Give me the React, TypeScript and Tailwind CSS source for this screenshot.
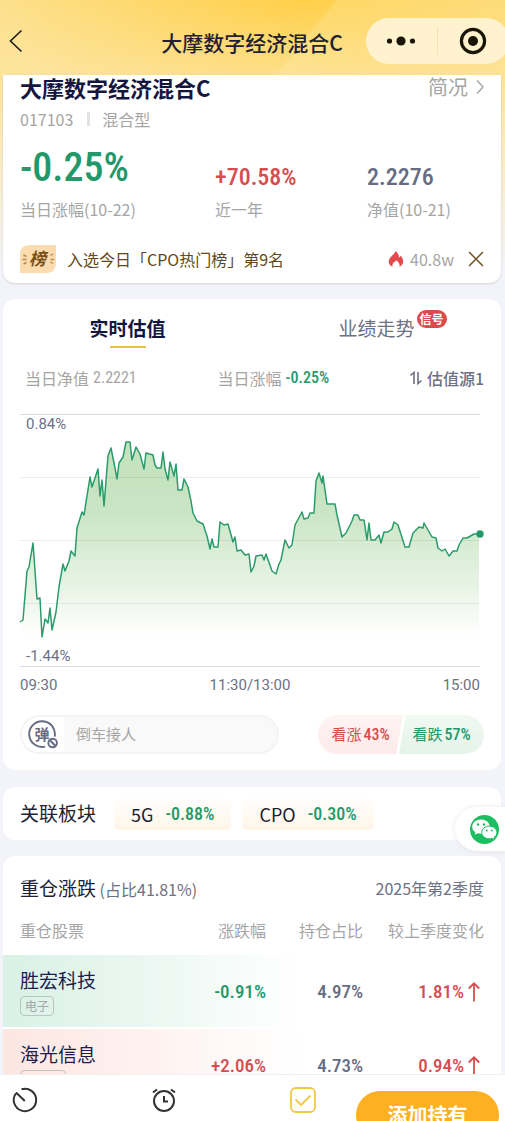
import { useState } from "react";
import clsx from "clsx";

const CHART_POINTS: [number, number][] = [
  [0, 208], [3, 206], [7, 157], [9, 153], [13, 129], [17, 185], [20, 184], [22, 223], [25, 205], [28, 209],
  [30, 194], [32, 216], [36, 198], [39, 173], [43, 150], [45, 157], [49, 147], [51, 137], [55, 142], [57, 114],
  [62, 98], [64, 101], [70, 63], [72, 73], [78, 55], [80, 82], [82, 66], [84, 92], [88, 42], [91, 34],
  [95, 54], [97, 65], [99, 49], [103, 43], [106, 28], [110, 28], [112, 46], [116, 33], [120, 40], [124, 55],
  [126, 39], [133, 41], [135, 51], [137, 54], [141, 54], [143, 38], [145, 55], [148, 66], [150, 48], [154, 62],
  [156, 50], [158, 76], [162, 76], [164, 65], [168, 73], [171, 87], [173, 99], [177, 107], [183, 110], [187, 122],
  [190, 135], [192, 125], [194, 133], [198, 133], [200, 108], [204, 111], [208, 110], [213, 128], [215, 123],
  [217, 137], [221, 136], [225, 141], [229, 140], [231, 158], [234, 152], [236, 142], [242, 141], [244, 146],
  [246, 140], [252, 157], [256, 160], [259, 150], [261, 146], [265, 126], [269, 134], [272, 131], [275, 111],
  [282, 98], [284, 105], [288, 104], [290, 99], [294, 99], [296, 67], [299, 59], [302, 69], [303, 62], [307, 90],
  [315, 90], [317, 101], [322, 123], [326, 119], [332, 107], [334, 101], [338, 101], [340, 106], [344, 106],
  [347, 126], [349, 109], [351, 126], [355, 126], [359, 121], [361, 129], [364, 118], [368, 118], [372, 115],
  [374, 108], [378, 111], [385, 133], [389, 133], [393, 119], [399, 113], [403, 114], [404, 109], [412, 123],
  [416, 124], [418, 134], [422, 137], [425, 135], [429, 142], [433, 137], [437, 137], [439, 131], [443, 124],
  [447, 124], [454, 120], [459, 120],
];

const NUM = "font-['Roboto_Condensed',Roboto,sans-serif]";

const sectors = [
  { name: "5G", change: "-0.88%" },
  { name: "CPO", change: "-0.30%" },
];

const holdings = [
  { name: "胜宏科技", tag: "电子", change: "-0.91%", up: false, ratio: "4.97%", diff: "1.81%" },
  { name: "海光信息", tag: "计算机", change: "+2.06%", up: true, ratio: "4.73%", diff: "0.94%" },
];

function Header() {
  return (
    <header className="flex h-[75px] shrink-0 items-center justify-between bg-[linear-gradient(129deg,transparent_59%,rgba(255,244,200,0.2)_60%,transparent)] pt-[7px]">
      <button type="button" aria-label="返回" className="flex w-[138px] pl-2">
        <svg className="h-6 w-4" viewBox="0 0 16 24" fill="none" stroke="#222" strokeWidth="1.7">
          <path d="M13.5 1.5 2.5 12l11 10.5" />
        </svg>
      </button>
      <h1 className="pt-1 text-[21px] font-medium whitespace-nowrap text-[#1f1e33]">大摩数字经济混合C</h1>
      <div className="-mr-1 flex h-[46px] w-[143px] shrink-0 items-center rounded-full bg-[#fff3cf]">
        <button type="button" aria-label="更多" className="flex flex-1 justify-center">
          <svg className="h-3 w-8" viewBox="0 0 32 12" fill="#1b1508">
            <circle cx="4.5" cy="6" r="2.6" />
            <circle cx="16" cy="6" r="4.6" />
            <circle cx="27.5" cy="6" r="2.6" />
          </svg>
        </button>
        <span className="h-7 w-px bg-[#f3e3b4]" />
        <button type="button" aria-label="关闭" className="flex flex-1 justify-center">
          <svg className="size-7" viewBox="0 0 28 28">
            <circle cx="14" cy="14" r="11.6" fill="none" stroke="#1b1508" strokeWidth="3.2" />
            <circle cx="14" cy="14" r="5" fill="#1b1508" />
          </svg>
        </button>
      </div>
    </header>
  );
}

function Summary() {
  return (
    <section className="shrink-0 rounded-b-xl bg-white px-[17px] shadow-sm">
      <div className="flex h-6 items-center justify-between">
        <h2 className="text-[22px] leading-5 font-bold text-[#15163f]">大摩数字经济混合C</h2>
        <a href="#profile" className="flex items-center gap-2 text-xl leading-6 text-[#a5a5a5]">
          简况
          <svg className="h-4 w-2" viewBox="0 0 8 16" fill="none" stroke="#a5a5a5" strokeWidth="1.4">
            <path d="m1 1.5 6 6.5-6 6.5" />
          </svg>
        </a>
      </div>
      <div className="mt-2 flex h-6 items-center text-base text-[#a5a5a5]">
        017103
        <span className="mr-3 ml-3.5 h-3.5 w-[3px] bg-[#e2e2e2]" />
        混合型
      </div>

      <dl className="mt-3 grid grid-cols-[195fr_152fr_117fr] items-end">
        <div className="flex flex-col">
          <dd className={clsx(NUM, "text-[40px] leading-[50px] font-medium text-[#23996a]")}>-0.25%</dd>
          <dt className="order-last mt-1 text-base leading-6 text-[#a5a5a5]">当日涨幅(10-22)</dt>
        </div>
        <div className="flex flex-col">
          <dd className={clsx(NUM, "text-2xl leading-8 font-medium text-[#d64c4f]")}>+70.58%</dd>
          <dt className="order-last mt-1 text-base leading-6 text-[#a5a5a5]">近一年</dt>
        </div>
        <div className="flex flex-col">
          <dd className={clsx(NUM, "text-2xl leading-8 font-medium text-[#666c83]")}>2.2276</dd>
          <dt className="order-last mt-1 text-base leading-6 text-[#a5a5a5]">净值(10-21)</dt>
        </div>
      </dl>

      <div className="mt-3.5 flex h-12 items-center">
        <svg className="h-7 w-9" viewBox="0 0 36 28">
          <path d="M10 0h26v18q0 10-10 10H0V10Q0 0 10 0Z" fill="#fbdcae" />
          <path d="m3.500 10 3 1.500M2.500 14.500h4M3.500 19l3-1.500M33 9l-2.500 1.500m3.500 4h-3.500m2.500 4-2.500-1.500" stroke="#b48a4e" strokeWidth="1.400" />
          <text x="9" y="20" fontSize="17" fontWeight="700" fontStyle="italic" fill="#7a5019">榜</text>
        </svg>
        <p className="ml-[11px] flex-1 text-base text-[#634717]">入选今日「CPO热门榜」第9名</p>
        <svg className="h-[18px] w-4" viewBox="0 0 16 18">
          <path
            d="M7.500 1c2.500 2 3.700 4.200 3.300 6.700.9-.4 1.400-1.200 1.600-2.200 2.200 2.300 3.100 4.600 2.600 7-.4 2-1.700 3.500-3.600 4.300.7-2.600-.4-4.600-3.100-6.300-3 1.800-4.500 3.700-3.800 6.300C2.400 15.900 1.100 14.300.8 12.200.4 9.300 2.300 7.300 4.500 5.300 5.900 4 6.900 2.700 7.500 1Z"
            fill="#e5484d"
          />
        </svg>
        <span className="ml-1.5 text-base text-[#a5a5a5]">40.8w</span>
        <button type="button" aria-label="关闭提示" className="ml-3.5">
          <svg className="size-4" viewBox="0 0 16 16" fill="none" stroke="#6f5426" strokeWidth="1.5">
            <path d="m1 1 14 14M15 1 1 15" />
          </svg>
        </button>
      </div>
    </section>
  );
}

function EstimateChart() {
  const line = CHART_POINTS.map((p) => p.join(",")).join(" ");

  return (
    <div className="mt-6 pr-[21px] pl-[17px] font-[Roboto,sans-serif] text-[15px] leading-5 text-[#6c7184]">
      <div className="relative">
        <svg className="block w-full overflow-visible" viewBox="0 0 460 252" fill="none">
          <defs>
            <linearGradient id="area" x1="0" y1="28" x2="0" y2="222" gradientUnits="userSpaceOnUse">
              <stop offset="0" stopColor="#c3e2bd" />
              <stop offset="0.35" stopColor="#c9e5c4" />
              <stop offset="0.8" stopColor="#ecf6ea" />
              <stop offset="1" stopColor="#fff" />
            </linearGradient>
          </defs>
          <polygon points={`0,222 ${line} 459,222`} fill="url(#area)" />
          <path d="M0 .5h460M0 252.500h460" stroke="#dcdcdf" />
          <path d="M0 63.500h460M0 126.500h460M0 189.500h460" stroke="#000" strokeOpacity="0.07" />
          <polyline points={line} stroke="#2b9b6b" strokeWidth="1.5" strokeLinejoin="round" />
          <circle cx="460" cy="120" r="3.700" fill="#23996a" />
        </svg>
        <span className="absolute top-0 left-1.5">0.84%</span>
        <span className="absolute bottom-0 left-1.5">-1.44%</span>
      </div>
      <div className="mt-[9px] grid grid-cols-3">
        <span>09:30</span>
        <span className="text-center">11:30/13:00</span>
        <span className="text-right">15:00</span>
      </div>
    </div>
  );
}

function Estimate() {
  const [tab, setTab] = useState(0);

  return (
    <section className="shrink-0 rounded-xl bg-white pt-[15px] pb-4">
      <div role="tablist" className="grid grid-cols-2">
        {["实时估值", "业绩走势"].map((label, i) => (
          <button
            key={label}
            type="button"
            role="tab"
            aria-selected={tab === i}
            onClick={() => setTab(i)}
            className={clsx(
              "flex flex-col items-center text-[19px] leading-7",
              tab === i ? "font-bold text-[#15163f]" : "text-[#6c7184]",
            )}
          >
            <span className="relative">
              {label}
              {i === 1 && (
                <span className="absolute -top-1 left-full ml-0.5 rounded-full bg-[#dd4a4a] px-[3px] text-xs leading-[18px] font-bold whitespace-nowrap text-white">
                  信号
                </span>
              )}
            </span>
            <span className={clsx("mt-1 h-0.5 w-9", tab === i && "bg-[#e3c04f]")} />
          </button>
        ))}
      </div>

      <div className="mt-[18px] grid grid-cols-[193fr_150fr_117fr] items-center pr-[17px] pl-[22px] text-base leading-6 text-[#a5a5a5]">
        <span className="flex gap-1">
          当日净值 <span className={NUM}>2.2221</span>
        </span>
        <span className="flex gap-1">
          当日涨幅 <span className={clsx(NUM, "font-medium text-[#23996a]")}>-0.25%</span>
        </span>
        <button type="button" className="flex items-center justify-end gap-1 font-medium whitespace-nowrap text-[#6c7184]">
          <svg className="h-3.5 w-3.5" viewBox="0 0 14 14" fill="none" stroke="#6c7184" strokeWidth="1.600">
            <path d="M1.500 4.500 5 1.500V13M9 1v11.500l3.500-3" />
          </svg>
          估值源1
        </button>
      </div>

      <EstimateChart />

      <div className="mt-5 flex h-[39px] items-center justify-between px-[17px]">
        <div className="flex h-full w-[259px] overflow-hidden rounded-full border-2 border-[#f4f4f4] bg-[#f9f9f9]">
          <button type="button" aria-label="弹幕" className="flex w-[42px] items-center justify-center bg-white">
            <svg className="size-[30px]" viewBox="0 0 28 28" fill="none" stroke="#666c83" strokeWidth="1.800">
              <path d="M24.900 15.500A12 12 0 1 0 16 24.800" />
              <text x="6" y="18.500" fontSize="14" fontWeight="700" fill="#666c83" stroke="none">弹</text>
              <circle cx="23" cy="21.500" r="4" />
              <path d="m20.200 18.700 5.600 5.600" />
            </svg>
          </button>
          <input
            aria-label="发弹幕"
            placeholder="倒车接人"
            className="min-w-0 flex-1 bg-transparent pl-3 text-[15px] outline-none placeholder:text-[#a5a5a5]"
          />
        </div>
        <div className="flex h-full w-[166px]">
          <button
            type="button"
            className="-mr-1 flex flex-1 items-center justify-center gap-0.5 rounded-l-full bg-linear-to-b from-[#fff3f3] to-[#fdeaea] text-[15px] text-[#d64c4f] [clip-path:polygon(0_0,100%_0,92%_100%,0_100%)]"
          >
            看涨<span className={clsx(NUM, "text-base font-medium")}>43%</span>
          </button>
          <button
            type="button"
            className="flex flex-1 items-center justify-center gap-0.5 rounded-r-full bg-linear-to-b from-[#f0f9f2] to-[#e5f3e9] text-[15px] text-[#23996a] [clip-path:polygon(8%_0,100%_0,100%_100%,0_100%)]"
          >
            看跌<span className={clsx(NUM, "text-base font-medium")}>57%</span>
          </button>
        </div>
      </div>
    </section>
  );
}

function Sectors() {
  return (
    <section className="relative mt-px flex h-[53px] shrink-0 items-center gap-[11px] rounded-xl bg-white px-[17px]">
      <h2 className="mr-[7px] text-[19px] text-[#1f1e33]">关联板块</h2>
      {sectors.map((s) => (
        <a
          key={s.name}
          href={`#${s.name}`}
          className="flex h-[33px] items-center gap-3 rounded bg-linear-to-b from-white to-[#fef5e7] px-[17px] text-lg text-[#1f1e33]"
        >
          {s.name}
          <span className={clsx(NUM, "text-lg font-medium text-[#23996a]")}>{s.change}</span>
        </a>
      ))}
      {/* Share to WeChat, docked to the screen edge */}
      <button
        type="button"
        aria-label="分享到微信"
        className="absolute top-5 -right-1 z-10 flex h-11 w-[50px] items-center justify-end rounded-l-full bg-white pr-1.5 shadow-[0_0_6px_rgba(0,0,0,0.08)]"
      >
        <svg className="size-[29px]" viewBox="0 0 29 29">
          <circle cx="14.500" cy="14.500" r="14.500" fill="#1bbf61" />
          <path
            d="M11 4.500c-5 0-8.800 3.200-8.800 7.200 0 2.300 1.200 4.200 3.200 5.500l-.8 2.600 3-1.500c1 .3 2 .5 3.400.5 5 0 8.800-3.100 8.800-7.100S16 4.500 11 4.500Z"
            fill="#fff"
          />
          <path
            d="M19.300 11.200c-4.300 0-7.600 2.800-7.600 6.300s3.300 6.300 7.600 6.300c1 0 2-.2 2.800-.4l2.600 1.300-.7-2.200c1.800-1.200 2.900-3 2.900-5 0-3.500-3.300-6.300-7.600-6.300Z"
            fill="#fff"
            stroke="#1bbf61"
          />
          <g fill="#1bbf61">
            <circle cx="8" cy="9.500" r="1.200" />
            <circle cx="14" cy="9.500" r="1.200" />
            <circle cx="16.800" cy="15.500" r="1" />
            <circle cx="21.800" cy="15.500" r="1" />
          </g>
        </svg>
      </button>
    </section>
  );
}

function Holdings() {
  return (
    <section className="shrink-0 rounded-t-xl bg-white pt-4">
      <div className="flex h-8 items-center justify-between px-[17px] text-base text-[#6c7184]">
        <h2>
          <span className="text-[19px] text-[#1f1e33]">重仓涨跌</span> (占比41.81%)
        </h2>
        <span>2025年第2季度</span>
      </div>
      <table className="w-full table-fixed border-separate border-spacing-x-0 border-spacing-y-0.5 text-right">
        <thead>
          <tr className="h-[47px] text-base text-[#a5a5a5]">
            <th className="pl-[17px] text-left font-normal">重仓股票</th>
            <th className="w-[100px] font-normal">涨跌幅</th>
            <th className="w-[97px] font-normal">持仓占比</th>
            <th className="w-[138px] pr-[17px] font-normal">较上季度变化</th>
          </tr>
        </thead>
        <tbody>
          {holdings.map((h) => (
            <tr
              key={h.name}
              className={clsx(
                "h-[72px] bg-linear-to-r to-60%",
                h.up ? "from-[#fde6e2] to-white" : "from-[#d9f1e6] to-white",
              )}
            >
              <td className="pt-0.5 pl-[17px] text-left">
                <div className="text-[19px] leading-6 text-[#1b1d4d]">{h.name}</div>
                <span className="mt-0.5 inline-block rounded-sm border border-[#bcc4c2] px-1 text-xs leading-[18px] text-[#a5a5a5]">
                  {h.tag}
                </span>
              </td>
              <td className={clsx(NUM, "pt-0.5 text-[19px] font-medium", h.up ? "text-[#d64c4f]" : "text-[#23996a]")}>
                {h.change}
              </td>
              <td className={clsx(NUM, "pt-0.5 text-[19px] font-medium text-[#666c83]")}>{h.ratio}</td>
              <td className={clsx(NUM, "pt-0.5 pr-[17px] text-[19px] font-medium text-[#d64c4f]")}>
                <span className="flex items-center justify-end gap-1">
                  {h.diff}
                  <svg className="mr-1 h-5 w-3" viewBox="0 0 12 20" fill="none" stroke="#d64c4f" strokeWidth="1.800">
                    <path d="M6 19.500V1.500M.8 6.500 6 1.300l5.200 5.200" />
                  </svg>
                </span>
              </td>
            </tr>
          ))}
        </tbody>
      </table>
    </section>
  );
}

function BottomBar() {
  return (
    <footer className="relative z-20 flex h-[47px] shrink-0 items-start gap-10 overflow-hidden border-t border-[#f0f0f0] bg-white pr-1.5 pl-3">
      <nav className="flex flex-1 items-center justify-between pt-3">
        <button type="button" aria-label="历史">
          <svg className="size-[26px]" viewBox="0 0 26 26" fill="none" stroke="#333" strokeWidth="2">
            <path d="M9.500 2.300A11.200 11.200 0 1 1 3.800 6.500M12.800 14 4 5.500" />
          </svg>
        </button>
        <button type="button" aria-label="提醒">
          <svg className="size-[26px]" viewBox="0 0 26 26" fill="none" stroke="#333" strokeWidth="2">
            <circle cx="13" cy="14" r="10" />
            <path d="M13 9v5.500h4M2 5.500l4-3M24 5.500l-4-3" />
          </svg>
        </button>
        <button type="button" aria-label="自选">
          <svg className="size-[26px]" viewBox="0 0 26 26" fill="none" stroke="#f2c744" strokeWidth="1.800">
            <rect x="1" y="1" width="24" height="24" rx="5" />
            <path d="m5.500 12.500 5.500 5.500 9.500-9.500" />
          </svg>
        </button>
      </nav>
      <button type="button" className="mt-4 h-12 w-[143px] rounded-full bg-[#fdb022] text-[20px] font-bold text-white">
        添加持有
      </button>
    </footer>
  );
}

export default function App() {
  return (
    <div className="relative flex h-screen flex-col overflow-hidden bg-[#f3f4fa] bg-[linear-gradient(180deg,transparent_0,rgba(252,240,205,0.3)_80px,#f3f4fa_270px),radial-gradient(ellipse_60%_140px_at_60%_0,#ffcf48,#fde08c)] font-['Noto_Sans_CJK_SC',sans-serif]">
      <Header />
      <main className="-mt-2 flex min-h-0 flex-1 flex-col gap-4 overflow-x-hidden overflow-y-auto pt-2 pr-1 pl-[3px] [scrollbar-width:none]">
        <Summary />
        <Estimate />
        <Sectors />
        <Holdings />
      </main>
      <BottomBar />
    </div>
  );
}
